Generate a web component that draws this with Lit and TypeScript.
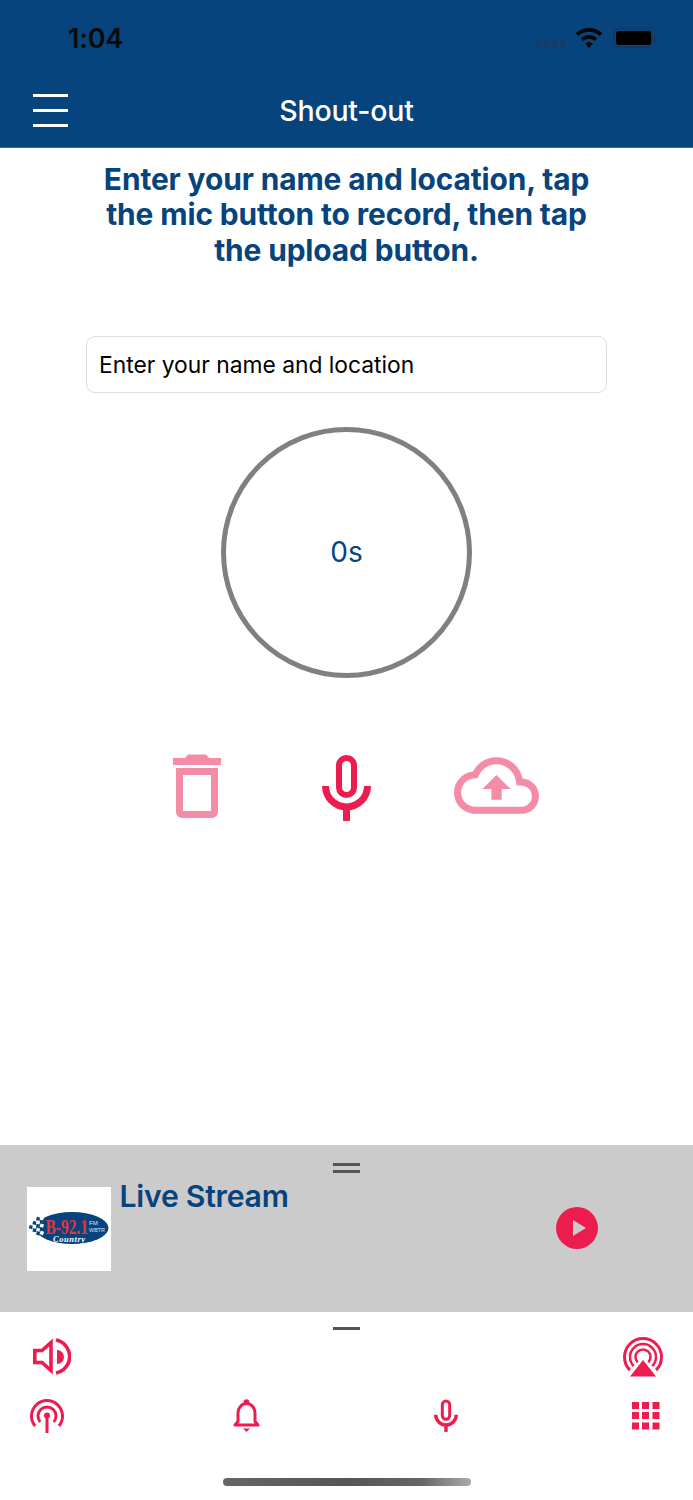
import { LitElement, html, css, svg } from "lit";
import { customElement } from "lit/decorators.js";

const micIcon = (w: number, h: number) => html`<svg width=${w} height=${h} viewBox="0 0 49 67" fill="none" stroke="#ed1c4f">
  <rect x="17" y="4" width="15" height="37" rx="7.5" stroke-width="6"/>
  <path d="M3.5 32a21 21 0 0 0 42 0" stroke-width="7"/>
  <path d="M24.5 55v12" stroke-width="7"/>
</svg>`;

@customElement("app-root")
export class AppRoot extends LitElement {
  static styles = css`
    :host { display: block; width: 693px; height: 1500px; background: #fff; font-family: Inter, Roboto, "Liberation Sans", sans-serif; overflow: hidden; }
    * { box-sizing: border-box; }
    .page { display: flex; flex-direction: column; height: 1500px; }
    header { height: 148px; background: #07437c; border-bottom: 1px solid #2f6aa6; display: flex; flex-direction: column; flex: none; }
    .status { height: 76px; flex: none; display: flex; align-items: center; padding: 0 36px 0 68px; }
    .time { font-size: 27px; font-weight: 600; color: #0a0a0a; line-height: 1; flex: 1; letter-spacing: -0.2px; }
    .status-icons { display: flex; align-items: center; }
    .dots { display: flex; gap: 2.5px; margin: 11px 9px 0 0; }
    .dots i { width: 6px; height: 6px; border-radius: 50%; background: #1a3a63; }
    .nav { position: relative; height: 72px; margin-top: -2px; display: flex; align-items: center; justify-content: center; color: #fff; }
    .nav h1 { margin: 0; font-size: 28.5px; font-weight: 500; letter-spacing: -0.2px; }
    .burger { position: absolute; left: 33px; top: 20px; width: 35px; display: flex; flex-direction: column; gap: 12px; }
    .burger i { height: 3px; background: #fff; display: block; }
    main { flex: 1; display: flex; flex-direction: column; align-items: center; padding-top: 13.5px; min-height: 0; }
    .intro { margin: 0; width: 510px; text-align: center; color: #07437c; font-size: 29.9px; line-height: 35.7px; font-weight: 700; letter-spacing: -0.12px; }
    .field { margin-top: 67.5px; width: 521px; height: 57px; border: 1px solid #dcdcdc; border-radius: 9px; display: flex; align-items: center; padding-left: 12px; font-size: 22.8px; color: #000; }
    .ring { margin-top: 33.5px; width: 251px; height: 251px; border: 5.5px solid #808080; border-radius: 50%; display: flex; align-items: center; justify-content: center; color: #07437c; font-size: 28px; }
    .actions { margin-top: 76px; display: grid; grid-template-columns: repeat(3, 150px); justify-items: center; align-items: start; }
    .faded { opacity: 0.5; }
    .cloud { margin-top: 3px; }
    .player { position: relative; height: 167px; flex: none; background: #cbcbcb; padding: 42px 0 0 27px; display: flex; }
    .grip { position: absolute; left: 333px; width: 27px; height: 3px; background: #555; }
    .grip.a { top: 18px; }
    .grip.b { top: 25px; }
    .thumb { width: 84px; height: 84px; background: #fff; flex: none; display: block; }
    .live { margin: -9px 0 0 8.5px; font-size: 30.2px; line-height: 36px; font-weight: 600; color: #07437c; letter-spacing: -0.25px; flex: 1; }
    .play { display: block; margin: 20px 95px 0 0; flex: none; }
    .dock { position: relative; height: 188px; flex: none; display: flex; flex-direction: column; }
    .grip.c { top: 15px; }
    .row { display: flex; justify-content: space-between; }
    .top { padding: 26px 29px 0 33px; height: 87px; align-items: flex-start; }
    .bottom { padding: 0 27px; align-items: flex-start; }
    .airplay { margin-top: -1px; }
    .cell { width: 40px; display: flex; justify-content: center; }
    .home { position: absolute; left: 223px; top: 166px; width: 248px; height: 8px; border-radius: 4px; background: linear-gradient(90deg, #666, #555 50%, #666 80%, #aaa); }
    svg { display: block; }
  `;

  render() {
    const cells: { x: number; y: number; blue: boolean }[] = [];
    for (let c = 0; c < 4; c++) for (let r = 0; r < 5; r++) {
      const x = 4 + c * 3.6;
      const y = 33 + r * 3.6 - c * 0.5;
      if (c === 0 && (r === 0 || r === 4)) continue;
      cells.push({ x, y, blue: (c + r) % 2 === 0 });
    }
    return html`<div class="page">
      <header>
        <div class="status">
          <span class="time">1:04</span>
          <div class="status-icons">
            <div class="dots"><i></i><i></i><i></i><i></i></div>
            <svg width="28" height="20" viewBox="0 0 28 20"><path d="M14 0C8.8 0 4.2 2 .8 5.3l2.6 2.8C6.2 5.400 9.900 3.800 14 3.800s7.800 1.600 10.600 4.300l2.600-2.800C23.800 2 19.200 0 14 0zM14 7c-3.200 0-6.100 1.300-8.200 3.300l2.600 2.800C9.900 11.700 11.800 10.800 14 10.800s4.100.9 5.600 2.300l2.600-2.800C20.100 8.300 17.200 7 14 7zM14 14c-1.400 0-2.700.6-3.700 1.500L14 20l3.700-4.500c-1-.9-2.300-1.500-3.700-1.500z" fill="#050505"/></svg>
            <svg style="margin-left:10px" width="44" height="20" viewBox="0 0 44 20"><rect x="0.800" y="0.800" width="38.400" height="18.400" rx="5.500" fill="none" stroke="#143763" stroke-width="1.600"/><rect x="3" y="3" width="35" height="14" rx="3" fill="#000"/><path d="M41 6.500c1.500.5 2.800 1.800 2.800 3.500s-1.300 3-2.800 3.500z" fill="#143763"/></svg>
          </div>
        </div>
        <div class="nav">
          <div class="burger"><i></i><i></i><i></i></div>
          <h1>Shout-out</h1>
        </div>
      </header>
      <main>
        <p class="intro">Enter your name and location, tap the mic button to record, then tap the upload button.</p>
        <div class="field">Enter your name and location</div>
        <div class="ring">0s</div>
        <div class="actions">
          <svg class="faded" width="50" height="64" viewBox="0 0 50 64" fill="#ed1c4f">
            <path d="M1 4h12l3-3.500h18l3 3.500h12v7H1z"/>
            <path d="M4 14h42v44a6 6 0 0 1-6 6H10a6 6 0 0 1-6-6zM11 21v36h28V21z" fill-rule="evenodd"/>
          </svg>
          ${micIcon(49, 67)}
          <svg class="faded cloud" width="85" height="57" viewBox="0 4 24 16" fill="#ed1c4f"><path d="M19.350 10.040C18.670 6.590 15.640 4 12 4 9.110 4 6.600 5.640 5.350 8.040 2.340 8.360 0 10.910 0 14c0 3.310 2.690 6 6 6h13c2.760 0 5-2.240 5-5 0-2.640-2.050-4.780-4.650-4.960zM19 18H6c-2.210 0-4-1.790-4-4 0-2.050 1.530-3.760 3.560-3.970l1.070-.11.5-.95C8.080 7.140 9.940 6 12 6c2.620 0 4.880 1.860 5.390 4.430l.3 1.500 1.530.11c1.560.1 2.780 1.410 2.780 2.960 0 1.650-1.350 3-3 3zM8 13h2.550v3h2.900v-3H16l-4-4z"/></svg>
        </div>
      </main>
      <section class="player">
        <span class="grip a"></span><span class="grip b"></span>
        <svg class="thumb" viewBox="0 0 84 84">
          <ellipse cx="45" cy="41" rx="36.500" ry="16" fill="#07437c"/>
          ${cells.map((k) => svg`<rect x=${k.x - 1.8} y=${k.y - 1.8} width="3.600" height="3.600" fill=${k.blue ? "#07437c" : "#fff"} transform="rotate(18 ${k.x} ${k.y})"/>`)}
          <text x="18.500" y="46.500" font-family="'Liberation Serif', serif" font-weight="700" font-size="21" fill="#e8343f" textLength="42.500" lengthAdjust="spacingAndGlyphs">B-92.1</text>
          <text x="62" y="37.500" font-family="'Liberation Sans', sans-serif" font-size="6" fill="#dfe8f2" textLength="9" lengthAdjust="spacingAndGlyphs">FM</text>
          <text x="62" y="45" font-family="'Liberation Sans', sans-serif" font-size="5.500" fill="#dfe8f2" textLength="16" lengthAdjust="spacingAndGlyphs">WBTR</text>
          <text x="26" y="54.500" font-family="'Liberation Serif', serif" font-style="italic" font-weight="700" font-size="8.500" fill="#fff" textLength="32" lengthAdjust="spacing">Country</text>
        </svg>
        <div class="live">Live Stream</div>
        <svg class="play" width="42" height="42" viewBox="0 0 42 42"><circle cx="21" cy="21" r="21" fill="#ed1c4f"/><path d="M17 13l13 8-13 8z" fill="#cbcbcb"/></svg>
      </section>
      <section class="dock">
        <span class="grip c"></span>
        <div class="row top">
          <svg width="38" height="38" viewBox="0 0 38 38" fill="none" stroke="#ed1c4f">
            <path d="M1.800 12.500H9L18 4.500V32.500L9 24.500H1.800z" stroke-width="3.600"/>
            <path d="M24 12a7 7 0 0 1 0 14z" fill="#ed1c4f" stroke="none"/>
            <path d="M23 2a16.800 16.800 0 0 1 0 33" stroke-width="3.600"/>
          </svg>
          <svg class="airplay" width="42" height="41" viewBox="0 0 42 41" fill="none" stroke="#ed1c4f">
            <path d="M7.900 33.100A18.500 18.500 0 1 1 34.100 33.100" stroke-width="3"/>
            <path d="M11.800 29.200A13 13 0 1 1 30.200 29.200" stroke-width="2.500"/>
            <path d="M15.700 25.300A7.500 7.500 0 1 1 26.300 25.300" stroke-width="2.500"/>
            <path d="M21 23L34 39.500H8z" fill="#ed1c4f" stroke="none"/>
          </svg>
        </div>
        <div class="row bottom">
          <div class="cell"><svg width="34" height="34" viewBox="0 0 34 34" fill="none" stroke="#ed1c4f" stroke-width="3">
            <path d="M5.100 27A15.500 15.500 0 1 1 28.900 27"/>
            <path d="M10.200 22.900A9 9 0 1 1 23.800 22.900"/>
            <circle cx="17" cy="16.500" r="3" fill="#ed1c4f" stroke="none"/>
            <path d="M17 17v17"/>
          </svg></div>
          <div class="cell"><svg width="27" height="34" viewBox="0 0 27 34" fill="none" stroke="#ed1c4f" stroke-width="3">
            <circle cx="13.500" cy="3" r="2.800" fill="#ed1c4f" stroke="none"/>
            <path d="M5 22.500V14C5 8.500 9 4.500 13.500 4.500S22 8.500 22 14v8.500l3 3.500H2z" stroke-linejoin="round"/>
            <path d="M10 29.500h7L13.500 33z" fill="#ed1c4f" stroke="none"/>
          </svg></div>
          <div class="cell">${micIcon(24, 33)}</div>
          <div class="cell"><svg style="margin-top:3px" width="28" height="28" viewBox="0 0 28 28" fill="#ed1c4f">
            <rect width="7" height="7"/><rect x="10" width="7" height="7"/><rect x="20.500" width="7" height="7"/>
            <rect y="10" width="7" height="7"/><rect x="10" y="10" width="7" height="7"/><rect x="20.500" y="10" width="7" height="7"/>
            <rect y="20.500" width="7" height="7"/><rect x="10" y="20.500" width="7" height="7"/><rect x="20.500" y="20.500" width="7" height="7"/>
          </svg></div>
        </div>
        <span class="home"></span>
      </section>
    </div>`;
  }
}
